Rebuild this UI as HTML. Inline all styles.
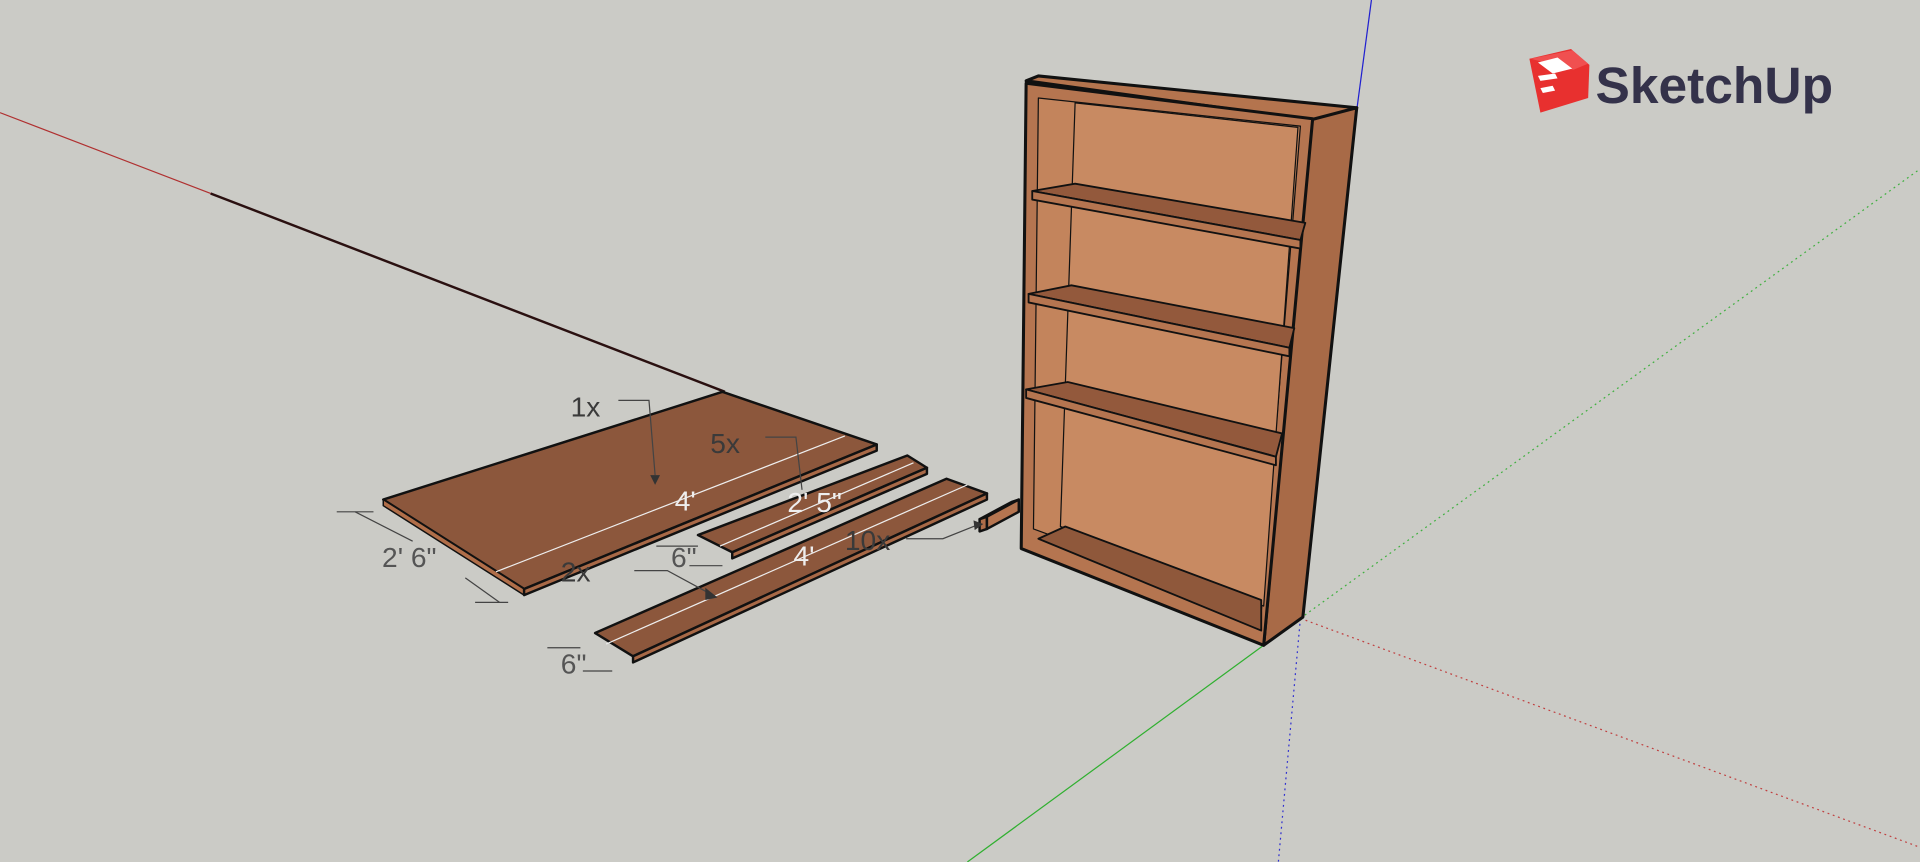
<!DOCTYPE html>
<html><head><meta charset="utf-8"><style>
html,body{margin:0;padding:0;background:#cbcbc6;overflow:hidden}
svg{display:block}
text{font-family:"Liberation Sans",sans-serif}
</style></head><body>
<svg width="1920" height="862" viewBox="0 0 1568 704" preserveAspectRatio="none" xmlns="http://www.w3.org/2000/svg">
<rect width="1568" height="704" fill="#cbcbc6"/>
<line x1="0" y1="92" x2="172" y2="158" stroke="#b03030" stroke-width="1"/>
<line x1="172" y1="158" x2="592" y2="320" stroke="#2a1010" stroke-width="2"/>
<line x1="1062" y1="505" x2="1568" y2="692" stroke="#c04040" stroke-width="1" stroke-dasharray="1.5 3"/>
<line x1="1032" y1="527" x2="790" y2="704" stroke="#30b030" stroke-width="1"/>
<line x1="1062" y1="505" x2="1568" y2="138" stroke="#40b040" stroke-width="1" stroke-dasharray="1.5 3"/>
<line x1="1108" y1="90" x2="1120" y2="0" stroke="#2020d0" stroke-width="1"/>
<line x1="1062" y1="505" x2="1044" y2="704" stroke="#3030d0" stroke-width="1" stroke-dasharray="1.5 3"/>
<g stroke="#111" stroke-linejoin="round">
<polygon points="1070,96 1108,88 1064,504 1032,527" fill="#a86a47" stroke-width="2.5"/>
<polygon points="838,66 848,62 1108,88 1070,98" fill="#b4744e" stroke-width="2.5"/>
<polygon points="838,68 1072,97 1032,527 834,448" fill="#b57550" stroke-width="2.5"/>
<polygon points="848,80 1062,103 1030,500 844,432" fill="#c3845c" stroke-width="1"/>
<polygon points="878,84 1060,104 1032,495 866,430" fill="#c88a62" stroke-width="1"/>
<polygon points="843,156 878,150 1066,182 1062,196" fill="#93593c" stroke-width="1.5"/>
<polygon points="843,156 1062,196 1062,203 843,163" fill="#b57550" stroke-width="1.5"/>
<polygon points="840,240 875,233 1057,268 1053,284" fill="#93593c" stroke-width="1.5"/>
<polygon points="840,240 1053,284 1053,291 840,247" fill="#b57550" stroke-width="1.5"/>
<polygon points="838,318 872,312 1047,354 1042,373" fill="#93593c" stroke-width="1.5"/>
<polygon points="838,318 1042,373 1042,380 838,325" fill="#b57550" stroke-width="1.5"/>
<polygon points="848,440 870,430 1030,490 1030,515" fill="#8f583b" stroke-width="1.5"/>
</g>
<g stroke="#111" stroke-linejoin="round" stroke-width="2">
<polygon points="313,408 590,320 716,363 428,481" fill="#8c573c"/>
<polygon points="313,408 428,481 428,486 313,413" fill="#b06e49" stroke-width="1.2"/>
<polygon points="428,481 716,363 716,368 428,486" fill="#a86947"/>
<polygon points="570,437 741,372 757,382 598,451" fill="#8c573c"/>
<polygon points="598,451 757,382 757,387 598,456" fill="#a86947"/>
<polygon points="486,517 773,391 806,403 517,536" fill="#8c573c"/>
<polygon points="517,536 806,403 806,408 517,541" fill="#a86947"/>
<polygon points="800,424 826,410 832,408 806,422" fill="#9a5f40"/>
<polygon points="800,424 806,422 806,432 800,434" fill="#b06e49"/>
<polygon points="806,422 832,408 832,418 806,432" fill="#b57550"/>
</g>
<g stroke="#eee" stroke-width="1" fill="none">
<line x1="405" y1="467" x2="690" y2="356"/>
<line x1="588" y1="446" x2="746" y2="378"/>
<line x1="495" y1="526" x2="790" y2="396"/>
</g>
<g stroke="#444" stroke-width="1" fill="none">
<line x1="275" y1="418" x2="305" y2="418"/>
<line x1="290" y1="418" x2="337" y2="442"/>
<line x1="408" y1="492" x2="380" y2="472"/>
<line x1="388" y1="492" x2="415" y2="492"/>
<line x1="536" y1="446" x2="570" y2="446"/>
<line x1="563" y1="462" x2="590" y2="462"/>
<line x1="447" y1="529" x2="474" y2="529"/>
<line x1="476" y1="548" x2="500" y2="548"/>
<polyline points="505,327 530,327 535,388"/>
<polyline points="625,357 650,357 655,400"/>
<polyline points="518,466 545,466 580,485"/>
<polyline points="740,440 770,440 800,428"/>
</g>
<g fill="#333">
<polygon points="531,388 539,388 535,396"/>
<polygon points="576,480 586,488 576,490"/>
<polygon points="795,425 803,428 796,433"/>
</g>
<g font-size="23" fill="#3a3a3a">
<text x="466" y="340">1x</text>
<text x="580" y="370">5x</text>
<text x="458" y="475">2x</text>
<text x="690" y="449">10x</text>
<text x="312" y="463" fill="#555">2' 6"</text>
<text x="548" y="463" fill="#555">6"</text>
<text x="458" y="550" fill="#555">6"</text>
</g>
<g font-size="23" fill="#eee">
<text x="551" y="417">4'</text>
<text x="643" y="418">2' 5"</text>
<text x="648" y="462">4'</text>
</g>
<polygon points="1249,48 1283,40 1298,53 1297,80 1258,92" fill="#e8302f"/>
<polygon points="1250,48 1284,41 1297,52 1285,57" fill="#f05050"/>
<g fill="#fff">
<polygon points="1256,51 1272,47 1284,56 1268,60"/>
<polygon points="1256,62 1270,60 1272,64 1258,66"/>
<polygon points="1258,72 1268,70 1270,74 1260,76"/>
</g>
<text x="1303" y="84" font-size="42" font-weight="bold" fill="#34324a" textLength="194" lengthAdjust="spacingAndGlyphs">SketchUp</text>
</svg>
</body></html>
